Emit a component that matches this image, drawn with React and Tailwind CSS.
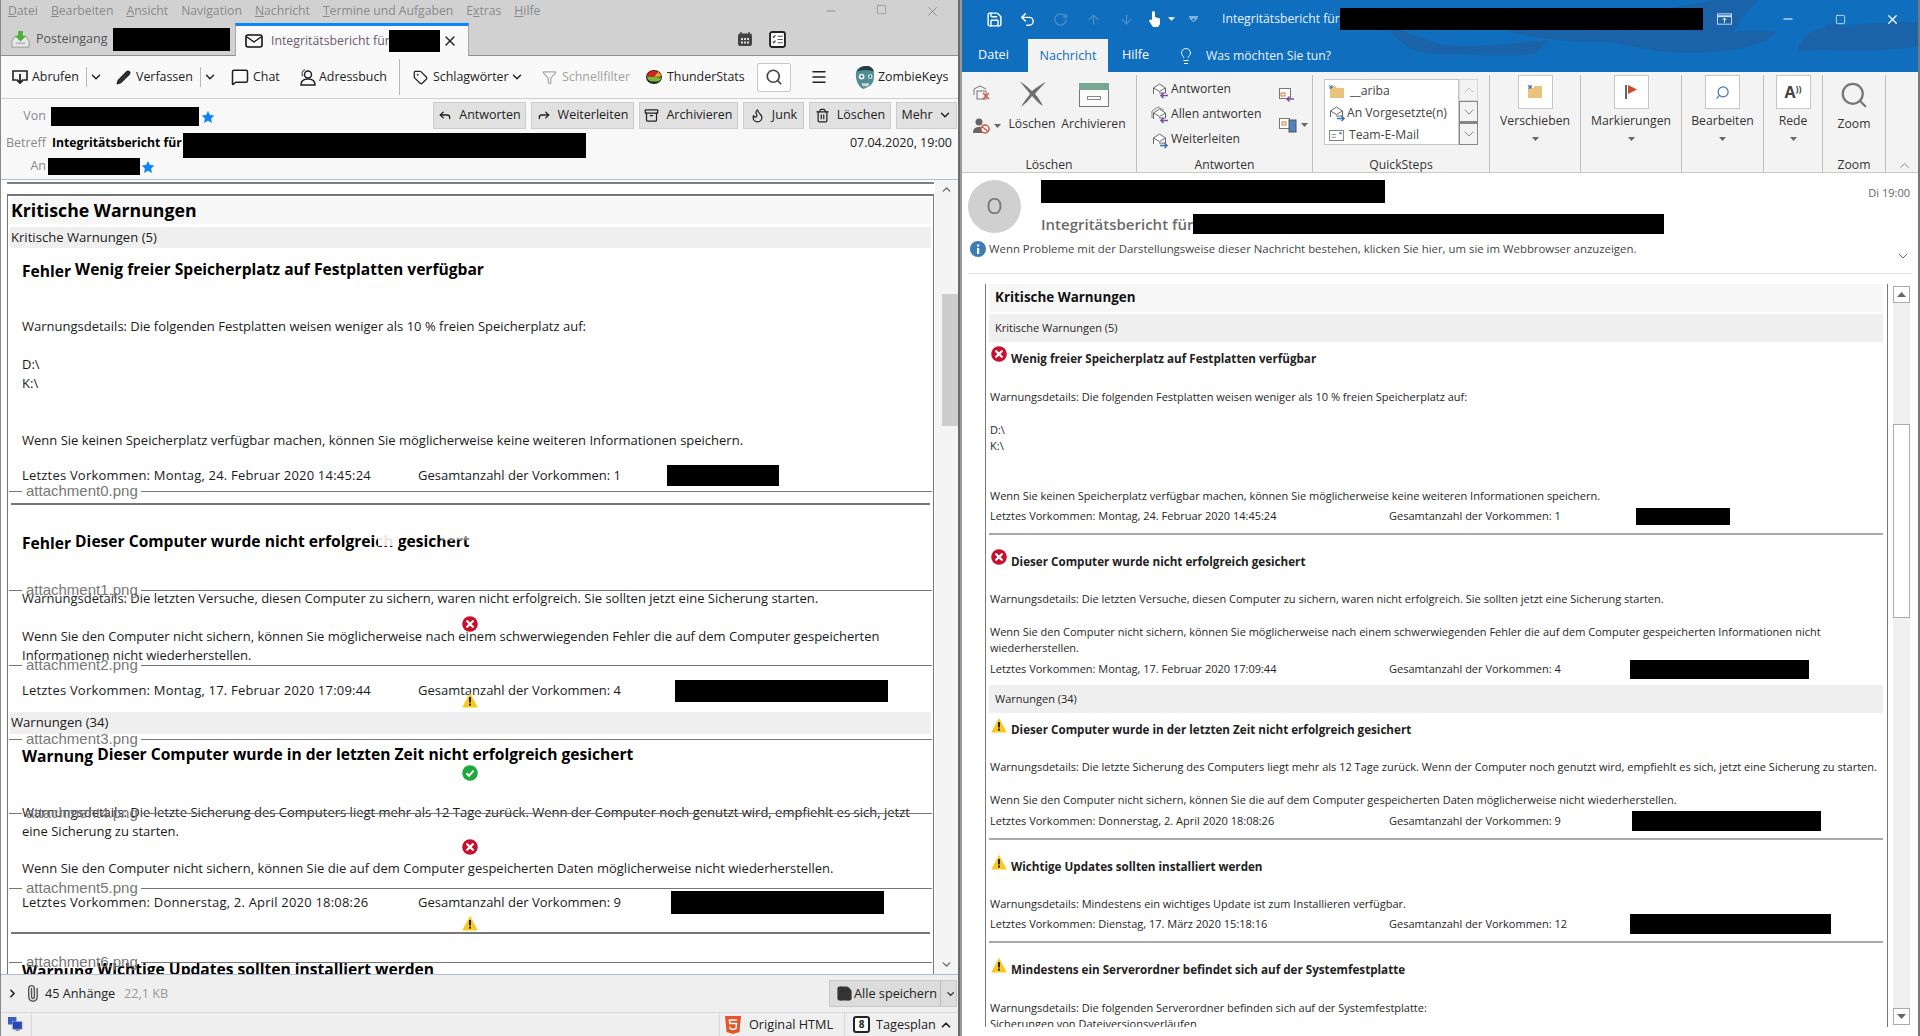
import React from 'react';
import { ChevronDown, ChevronUp, ChevronRight, X, Minus, Square, Search, Menu, Tag, Filter, MessageSquare, Trash2, Reply, Paperclip, Lightbulb, Undo2, RotateCw, ArrowUp, ArrowDown, Save, Pencil, Archive, Flame } from 'lucide-react';

const Black = ({ className }) => <div className={`bg-black shrink-0 ${className}`} />;

const Star = () => (
  <svg viewBox="0 0 16 16" className="w-[14px] h-[14px] shrink-0">
    <path d="M8 1l2.200 4.600 5 .7-3.600 3.500.9 5L8 12.400l-4.500 2.400.9-5L.8 6.300l5-.7z" fill="#0a84ff" />
  </svg>
);
const ErrIcon = () => (
  <svg viewBox="0 0 16 16" className="w-4 h-4 shrink-0">
    <circle cx="8" cy="8" r="7.800" fill="#c8102e" />
    <path d="M5.200 5.200l5.600 5.600M10.800 5.200l-5.600 5.600" stroke="#fff" strokeWidth="2.300" strokeLinecap="round" />
  </svg>
);
const WarnIcon = () => (
  <svg viewBox="0 0 16 16" className="w-4 h-4 shrink-0">
    <path d="M8 .8L15.800 15.500H.2z" fill="#fbc91e" />
    <path d="M8 5v5.500" stroke="#222" strokeWidth="2" />
    <rect x="7" y="11.600" width="2" height="2" fill="#222" />
  </svg>
);
const OkIcon = () => (
  <svg viewBox="0 0 16 16" className="w-4 h-4 shrink-0">
    <circle cx="8" cy="8" r="7.800" fill="#1fa83c" />
    <path d="M4.500 8.200l2.500 2.600 4.600-5.200" stroke="#fff" strokeWidth="2" fill="none" />
  </svg>
);

const MailArrow = ({ color, reply, stack }) => (
  <svg viewBox="0 0 18 18" className="w-[18px] h-[18px] shrink-0">
    {stack && <path d="M1 12V5l6-4 6 3" fill="none" stroke="#888" strokeWidth="1" />}
    <path d="M2.500 13V7l6-4 6 4v5H8" fill="#fff" stroke="#666" strokeWidth="1" />
    <path d="M2.500 7l6 3.500 6-3.500" fill="none" stroke="#666" strokeWidth="1" />
    {reply
      ? <path d="M17 14.500h-7m2.500-2.500L10 14.500l2.500 2.500" fill="none" stroke={color} strokeWidth="1.600" />
      : <path d="M9 14.500h7m-2.500-2.500l2.500 2.500-2.500 2.500" fill="none" stroke={color} strokeWidth="1.600" />}
  </svg>
);

// ---------- left window (Thunderbird) ----------

const MenuBar = () => (
  <div className="h-[23px] flex items-center pl-[7px] text-[12.2px] text-[#8a8a8a] shrink-0">
    <div className="flex gap-[13px]">
      <span><span className="underline">D</span>atei</span>
      <span><span className="underline">B</span>earbeiten</span>
      <span><span className="underline">A</span>nsicht</span>
      <span>Navigation</span>
      <span><span className="underline">N</span>achricht</span>
      <span><span className="underline">T</span>ermine und Aufgaben</span>
      <span>E<span className="underline">x</span>tras</span>
      <span><span className="underline">H</span>ilfe</span>
    </div>
    <div className="ml-auto flex text-[#666]">
      <div className="w-[51px] flex justify-center"><Minus size={14} strokeWidth={1} /></div>
      <div className="w-[51px] flex justify-center"><Square size={11} strokeWidth={1} /></div>
      <div className="w-[51px] flex justify-center"><X size={15} strokeWidth={1} /></div>
    </div>
  </div>
);

const TabBar = () => (
  <div className="h-[33px] flex border-b border-[#8f8f8f] relative shrink-0">
    <div className="w-[234px] flex items-center pl-[10px] text-[12.5px] text-[#555]">
      <svg viewBox="0 0 20 20" className="w-[19px] h-[19px] shrink-0">
        <path d="M1 12l3-5h12l3 5v6H1z" fill="#e8e8e8" stroke="#9a9a9a" />
        <path d="M5 13h10v2H5z" fill="#bbb" />
        <path d="M7.500 1h5v5H16l-6 6-6-6h3.500z" fill="#4caf3a" />
      </svg>
      <span className="ml-[6px] w-[77px] whitespace-nowrap">Posteingang</span>
      <Black className="w-[117px] h-[23px]" />
    </div>
    <div className="w-[234px] h-[33px] bg-[#f9f9f9] border-t-[3px] border-t-[#0a84ff] border-x border-x-[#a8a8a8] flex items-center pl-[9px] text-[12.3px] text-[#6b5a6b]">
      <svg viewBox="0 0 18 14" className="w-[18px] h-[14px] shrink-0">
        <rect x="1" y="1" width="16" height="12" rx="2" fill="none" stroke="#111" strokeWidth="1.600" />
        <path d="M2 3l7 5 7-5" fill="none" stroke="#111" strokeWidth="1.400" />
      </svg>
      <span className="ml-[8px] w-[118px] whitespace-nowrap">Integritätsbericht für</span>
      <Black className="w-[51px] h-[22px]" />
      <X size={16} className="ml-[2px] text-[#222]" />
    </div>
    <div className="ml-auto flex items-center pr-[172px] gap-[16px]">
      <svg viewBox="0 0 16 16" className="w-4 h-4">
        <rect x="1" y="2.500" width="14" height="12.500" rx="2" fill="#444" />
        <path d="M4 1v3M12 1v3" stroke="#444" strokeWidth="1.400" />
        <path d="M4 7h2v2H4zM7 7h2v2H7zM10 7h2v2h-2zM4 10.500h2v2H4zM7 10.500h2v2H7zM10 10.500h2v2h-2z" fill="#ddd" />
      </svg>
      <svg viewBox="0 0 16 16" className="w-[17px] h-[17px]">
        <rect x="1" y="1" width="14" height="14" rx="2" fill="#fff" stroke="#222" strokeWidth="1.800" />
        <path d="M3.500 5l1 1 1.600-2M3.500 10l1 1 1.600-2" fill="none" stroke="#333" />
        <path d="M8 5h5M8 8h5M8 11h5" stroke="#555" />
      </svg>
    </div>
  </div>
);

const Abrufen = () => (
  <svg viewBox="0 0 16 16" className="w-4 h-4 shrink-0">
    <path d="M4 11H1V2h14v9h-3" fill="none" stroke="#222" strokeWidth="1.600" />
    <path d="M8 5v9M4.500 10.500L8 14l3.500-3.500" fill="none" stroke="#222" strokeWidth="1.800" />
  </svg>
);
const People = () => (
  <svg viewBox="0 0 18 18" className="w-[18px] h-[18px] shrink-0">
    <circle cx="10" cy="6.500" r="3.500" fill="none" stroke="#222" strokeWidth="1.500" />
    <path d="M3 17c0-4 3-6 7-6s7 2 7 6z" fill="none" stroke="#222" strokeWidth="1.500" />
    <path d="M5 8c-2-2-1-5 2-6.500" fill="none" stroke="#555" strokeWidth="1.200" />
  </svg>
);
const Pie = () => (
  <svg viewBox="0 0 16 14" className="w-4 h-[14px] shrink-0">
    <ellipse cx="8" cy="7" rx="8" ry="7" fill="#222" />
    <path d="M1 6.500C1 3 4 1 8 1c1.500 0 3 .3 4 1L8 7z" fill="#d8201c" />
    <path d="M12 2c2 1 3 2.500 3 4.500L8 7z" fill="#f2a51c" />
    <path d="M1 6.500L8 7l7 .5c0 2-1 3-3 4H5C3 11 1 9 1 6.500z" fill="#79b93a" />
  </svg>
);
const Zombie = () => (
  <svg viewBox="0 0 24 26" className="w-[23px] h-[25px] shrink-0">
    <path d="M3 10C3 4 7 1 13 1s9 4 9 10-2 9-5 11l-6 3c-5-2-8-8-8-15z" fill="#4b8f99" />
    <path d="M4 7c2-4 6-6 10-6 4 0 7 2 8 6-5-2-13-2-18 0z" fill="#2d3a42" />
    <circle cx="9" cy="12" r="3" fill="#e9eee6" /><circle cx="18" cy="12" r="2.400" fill="#e9eee6" />
    <circle cx="9" cy="12" r="1" fill="#222" /><circle cx="18" cy="12" r="1" fill="#222" />
    <path d="M9 19h8l-1 3h-6z" fill="#d9d6c6" />
  </svg>
);
const Sep = ({ className }) => <div className={`w-px bg-[#b8b8b8] shrink-0 ${className}`} />;

const Toolbar = () => (
  <div className="h-[43px] bg-[#f9f9f9] border-b border-[#cfcfcf] flex items-center text-[12.4px] text-[#222] whitespace-nowrap shrink-0">
    <div className="ml-[11px]"><Abrufen /></div>
    <span className="ml-[4px] w-[46px]">Abrufen</span>
    <Sep className="ml-[8px] h-[20px]" />
    <ChevronDown size={14} strokeWidth={2.500} className="ml-[2px]" />
    <Pencil size={15} fill="#333" className="ml-[13px] shrink-0" />
    <span className="ml-[5px] w-[56px]">Verfassen</span>
    <Sep className="ml-[8px] h-[20px]" />
    <ChevronDown size={14} strokeWidth={2.500} className="ml-[2px]" />
    <MessageSquare size={18} strokeWidth={2} className="ml-[14px] shrink-0" />
    <span className="ml-[4px] w-[26px]">Chat</span>
    <div className="ml-[19px]"><People /></div>
    <span className="ml-[3px] w-[68px]">Adressbuch</span>
    <Sep className="ml-[12px] h-[36px]" />
    <Tag size={15} className="ml-[13px] shrink-0" />
    <span className="ml-[5px] w-[76px]">Schlagwörter</span>
    <ChevronDown size={14} strokeWidth={2.500} className="ml-[1px]" />
    <Filter size={15} className="ml-[18px] text-[#a8a8a8] shrink-0" />
    <span className="ml-[5px] w-[66px] text-[#a0a0a0]">Schnellfilter</span>
    <div className="ml-[18px]"><Pie /></div>
    <span className="ml-[5px] w-[76px]">ThunderStats</span>
    <div className="ml-[14px] w-[34px] h-[29px] bg-white border border-[#c8c8c8] rounded-[2px] flex items-center justify-center shrink-0">
      <Search size={18} strokeWidth={2.200} className="text-[#444]" />
    </div>
    <Menu size={18} strokeWidth={2} className="ml-[19px] shrink-0" />
    <div className="ml-[25px]"><Zombie /></div>
    <span className="ml-[2px]">ZombieKeys</span>
  </div>
);

const HeadBtn = ({ icon, label, className }) => (
  <div className={`h-[27px] bg-[#e1e1e1] border border-[#cdcdcd] flex items-center justify-center gap-[7px] text-[12.5px] text-[#222] whitespace-nowrap shrink-0 ${className}`}>
    {icon}{label}
  </div>
);

const MsgHeader = () => (
  <div className="h-[81px] bg-[#f8f8f8] border-b border-[#b0bdd0] text-[12.5px] shrink-0">
    <div className="h-[30px] flex items-center pr-[1px] pt-[2px]">
      <span className="w-[45px] text-right text-[#8a8a8a] mt-[3px]">Von</span>
      <Black className="ml-[5px] w-[148px] h-[19px] mt-[3px]" />
      <div className="ml-[2px] mt-[3px]"><Star /></div>
      <div className="ml-auto flex gap-[5px]">
        <HeadBtn className="w-[93px]" icon={<Reply size={14} strokeWidth={2.200} />} label="Antworten" />
        <HeadBtn className="w-[103px]" icon={<Reply size={14} strokeWidth={2.200} className="-scale-x-100" />} label="Weiterleiten" />
        <HeadBtn className="w-[99px]" icon={<Archive size={15} />} label="Archivieren" />
        <HeadBtn className="w-[61px]" icon={<Flame size={15} />} label="Junk" />
        <HeadBtn className="w-[82px]" icon={<Trash2 size={15} />} label="Löschen" />
        <HeadBtn className="w-[61px]" label={<span className="flex items-center gap-[5px]">Mehr <ChevronDown size={14} strokeWidth={2.500} /></span>} />
      </div>
    </div>
    <div className="mt-[4px] h-[25px] flex items-center pr-[6px]">
      <span className="w-[45px] text-right text-[#8a8a8a] mb-[5px]">Betreff</span>
      <span className="ml-[6px] w-[131px] font-bold text-black whitespace-nowrap text-[12.2px] mb-[5px]">Integritätsbericht für</span>
      <Black className="w-[403px] h-[25px]" />
      <span className="ml-auto text-[#222] mb-[5px]">07.04.2020, 19:00</span>
    </div>
    <div className="h-[17px] flex items-center">
      <span className="w-[45px] text-right text-[#8a8a8a]">An</span>
      <Black className="ml-[2px] w-[92px] h-[17px]" />
      <div className="ml-[1px]"><Star /></div>
    </div>
  </div>
);

const Row = ({ children, className = '' }) => (
  <div className={`pl-[12px] h-[19px] leading-[19px] whitespace-nowrap ${className}`}>{children}</div>
);

const Para = ({ children, className = '' }) => (
  <div className={`pl-[12px] leading-[19px] whitespace-nowrap ${className}`}>{children}</div>
);

const LeftHeading = ({ kind, title, className = '' }) => (
  <div className={`h-[24px] flex items-center pl-[12px] font-bold text-black whitespace-nowrap text-[15.6px] ${className}`}>
    <span className="mt-[4px]">{kind}</span>
    <span className="ml-[4px]">{title}</span>
  </div>
);

const LeftStats = ({ date, count, countW, rectW, rectH, className = '' }) => (
  <div className={`pl-[12px] h-[19px] flex items-center whitespace-nowrap ${className}`}>
    <span className="w-[396px] tracking-[0.2px]">Letztes Vorkommen: {date}</span>
    <span className={countW}>Gesamtanzahl der Vorkommen: {count}</span>
    <Black className={`${rectW} ${rectH}`} />
  </div>
);

const Attach = ({ name, className }) => (
  <div className={`absolute left-[8px] w-[923px] h-[18px] flex items-center ${className}`}>
    <div className="w-[13px] h-px bg-[#777]" />
    <span className="ml-[4px] font-['Liberation_Sans',sans-serif] text-[15px] text-[#777] leading-[18px]">{name}</span>
    <div className="ml-[3px] flex-1 h-px bg-[#777]" />
  </div>
);

const LeftBody = () => (
  <div className="flex-1 min-h-0 flex relative overflow-hidden bg-white text-[13px] text-[#1a1a1a]">
    <div className="w-[934px] shrink-0">
      <div className="mt-[2px] ml-[6px] w-[927px] h-[2px] bg-[#808080]" />
      <div className="mt-[10px] ml-[6px] w-[927px] h-[800px] border-t-2 border-x border-[#777] px-[2px]">
        <div className="mt-[1px] h-[27px] bg-[#f7f7f7] flex items-center pl-[1px] font-bold text-[17.700px] text-black">Kritische Warnungen</div>
        <div className="mt-[3px] h-[21px] bg-[#efefef] flex items-center pl-[1px] text-[13.1px]">Kritische Warnungen (5)</div>
        <LeftHeading className="mt-[10px]" kind="Fehler" title="Wenig freier Speicherplatz auf Festplatten verfügbar" />
        <Row className="mt-[35px]">Warnungsdetails: Die folgenden Festplatten weisen weniger als 10 % freien Speicherplatz auf:</Row>
        <Row className="mt-[19px]">D:\</Row>
        <Row>K:\</Row>
        <Row className="mt-[38px]">Wenn Sie keinen Speicherplatz verfügbar machen, können Sie möglicherweise keine weiteren Informationen speichern.</Row>
        <LeftStats className="mt-[16px]" date="Montag, 24. Februar 2020 14:45:24" count="1" countW="w-[249px]" rectW="w-[112px]" rectH="h-[21px]" />
        <div className="mt-[18px] mx-px h-[2px] bg-[#777]" />
        <LeftHeading className="mt-[25px]" kind="Fehler" title="Dieser Computer wurde nicht erfolgreich gesichert" />
        <Row className="mt-[35px]">Warnungsdetails: Die letzten Versuche, diesen Computer zu sichern, waren nicht erfolgreich. Sie sollten jetzt eine Sicherung starten.</Row>
        <Para className="mt-[19px]">Wenn Sie den Computer nicht sichern, können Sie möglicherweise nach einem schwerwiegenden Fehler die auf dem Computer gespeicherten<br />Informationen nicht wiederherstellen.</Para>
        <LeftStats className="mt-[16px]" date="Montag, 17. Februar 2020 17:09:44" count="4" countW="w-[257px]" rectW="w-[213px]" rectH="h-[22px]" />
        <div className="mt-[12px] h-[22px] bg-[#efefef] flex items-center pl-px text-[13.1px]">Warnungen (34)</div>
        <LeftHeading className="mt-[9px]" kind="Warnung" title="Dieser Computer wurde in der letzten Zeit nicht erfolgreich gesichert" />
        <Para className="mt-[36px]">Warnungsdetails: Die letzte Sicherung des Computers liegt mehr als 12 Tage zurück. Wenn der Computer noch genutzt wird, empfiehlt es sich, jetzt<br />eine Sicherung zu starten.</Para>
        <Row className="mt-[18px]">Wenn Sie den Computer nicht sichern, können Sie die auf dem Computer gespeicherten Daten möglicherweise nicht wiederherstellen.</Row>
        <LeftStats className="mt-[15px]" date="Donnerstag, 2. April 2020 18:08:26" count="9" countW="w-[253px]" rectW="w-[213px]" rectH="h-[23px]" />
        <div className="mt-[20px] mx-px h-[2px] bg-[#777]" />
        <LeftHeading className="mt-[24px]" kind="Warnung" title="Wichtige Updates sollten installiert werden" />
      </div>
    </div>
    {/* the attachments and their icons are drawn over the message text */}
    <Attach name="attachment0.png" className="top-[302px]" />
    <Attach name="attachment1.png" className="top-[401px]" />
    <Attach name="attachment2.png" className="top-[476px]" />
    <Attach name="attachment3.png" className="top-[550px]" />
    <Attach name="attachment4.png" className="top-[624px]" />
    <Attach name="attachment5.png" className="top-[699px]" />
    <Attach name="attachment6.png" className="top-[773px]" />
    <div className="absolute left-[461px] top-[436px]"><ErrIcon /></div>
    <div className="absolute left-[461px] top-[512px]"><WarnIcon /></div>
    <div className="absolute left-[461px] top-[585px]"><OkIcon /></div>
    <div className="absolute left-[461px] top-[659px]"><ErrIcon /></div>
    <div className="absolute left-[461px] top-[735px]"><WarnIcon /></div>
    <div className="absolute left-[377px] top-[353px] w-[21px] h-[13px] bg-white/90" />
    <div className="absolute left-[440px] top-[354px] w-[28px] h-[6px] bg-white/50" />
    <div className="w-[23px] bg-[#f4f4f4] relative flex flex-col items-center">
      <ChevronUp size={13} strokeWidth={2.500} className="mt-[3px] text-[#666]" />
      <div className="mt-[98px] ml-[7px] w-[16px] h-[132px] bg-[#cdcdcd]" />
      <ChevronDown size={13} strokeWidth={2.500} className="mt-auto mb-[3px] text-[#666]" />
    </div>
  </div>
);

const AttachBar = () => (
  <div className="h-[38px] bg-[#efefef] border-t border-[#b0bdd0] flex items-center text-[12.7px] text-[#222] pl-[5px] whitespace-nowrap shrink-0">
    <ChevronRight size={13} strokeWidth={3} className="shrink-0" />
    <Paperclip size={17} className="ml-[5px] text-[#555] shrink-0 -rotate-45" />
    <span className="ml-[4px] w-[68px]">45 Anhänge</span>
    <span className="ml-[11px] text-[#999]">22,1 KB</span>
    <div className="ml-auto mr-[1px] w-[128px] h-[27px] bg-[#dcdcdc] border border-[#c8c8c8] flex items-center">
      <Save size={17} fill="#333" color="#333" className="ml-[6px] shrink-0" />
      <span className="ml-[1px] w-[84px]">Alle speichern</span>
      <div className="w-px h-full bg-[#bbb] ml-[3px]" />
      <ChevronDown size={14} strokeWidth={2.500} className="ml-[4px]" />
    </div>
  </div>
);

const StatusBar = () => (
  <div className="h-[24px] shrink-0 bg-[#efefef] border-t border-[#d8d8d8] flex items-center text-[12.7px] text-[#222] whitespace-nowrap">
    <div className="w-[31px] h-full border-r border-[#d8d8d8] flex items-center pl-[7px]">
      <svg viewBox="0 0 16 16" className="w-[15px] h-[15px]">
        <rect x="0" y="0" width="9" height="8" fill="#3b5cc4" />
        <rect x="5" y="5" width="10" height="8" fill="#2747b8" stroke="#9ab" strokeWidth=".6" />
        <path d="M8 13h4v2H8z" fill="#888" />
      </svg>
    </div>
    <div className="ml-auto w-[125px] h-full border-l border-[#d8d8d8] flex items-center pl-[5px]">
      <svg viewBox="0 0 16 18" className="w-[16px] h-[18px] shrink-0">
        <path d="M0 0h16l-1.500 16L8 18l-6.500-2z" fill="#e5532d" />
        <path d="M12 4H4.500l.3 3.500H11.500L11 12.500 8 13.500 5 12.500 4.800 10.500" fill="none" stroke="#fff" strokeWidth="1.500" />
      </svg>
      <span className="ml-[8px]">Original HTML</span>
    </div>
    <div className="w-[114px] h-full border-l border-[#d8d8d8] flex items-center pl-[8px]">
      <div className="w-[17px] h-[17px] border-2 border-[#222] rounded-[3px] bg-white text-[10px] font-bold flex items-center justify-center shrink-0">8</div>
      <span className="ml-[6px]">Tagesplan</span>
      <ChevronUp size={14} strokeWidth={3} className="ml-[3px]" />
    </div>
  </div>
);

const LeftWindow = () => (
  <div className="w-[960px] h-full flex flex-col border-l border-r-2 border-l-[#8a8a8a] border-r-[#6b6b6b] bg-[#d1d1d1] font-['Open_Sans','Noto_Sans',sans-serif]">
    <MenuBar />
    <TabBar />
    <Toolbar />
    <MsgHeader />
    <LeftBody />
    <AttachBar />
    <StatusBar />
  </div>
);

// ---------- right window (Outlook) ----------

const Dolphins = () => (
  <svg viewBox="0 0 560 72" className="absolute right-0 top-0 w-[560px] h-[72px]">
    <path d="M30 28c15 2 30 8 50 16 20 4 50 2 110-4-6 8-10 10-14 14-30 2-60 0-90 0-20 2-40-4-56-26z" fill="#1a63a8" />
    <path d="M130 22c40 8 90 8 130-2 30-8 60-14 100-20h40c-10 10-20 24-24 32 14-2 28-2 42 0-6 8-20 14-45 18-30 4-60 4-90-2-20-4-40-8-60-6-30-2-70-6-93-20z" fill="#1a63a8" />
    <path d="M440 52c0-10 10-22 26-24 4-6 10-6 18-2 20-2 40-4 76-4v24c-20 4-60 6-90 4-12 0-22 0-30 2z" fill="#1a63a8" />
  </svg>
);

const TitleRow = () => (
  <div className="h-[38px] relative flex items-center text-white">
    <Save size={17} className="ml-[24px] shrink-0" />
    <Undo2 size={17} className="ml-[16px] shrink-0" />
    <RotateCw size={15} className="ml-[17px] text-[#4d8fcb] shrink-0" />
    <ArrowUp size={15} className="ml-[18px] text-[#4d8fcb] shrink-0" />
    <ArrowDown size={15} className="ml-[18px] text-[#4d8fcb] shrink-0" />
    <svg viewBox="0 0 14 18" className="ml-[14px] w-[14px] h-[18px] shrink-0">
      <path d="M4 9V2.500a1.500 1.500 0 013 0V7l5 1.500V14l-2 3H5L1 11c0-1.500 2-2 3-1z" fill="#fff" />
    </svg>
    <svg viewBox="0 0 8 4" className="ml-[6px] w-[7px] h-[4px] shrink-0"><path d="M0 0h8L4 4z" fill="#fff" /></svg>
    <svg viewBox="0 0 10 7" className="ml-[14px] w-[9px] h-[7px] shrink-0"><path d="M0 .5h10M1 2l4 4 4-4z" fill="none" stroke="#cfe2f3" /></svg>
    <span className="ml-[24px] w-[118px] text-[12.2px] text-[#e8f1fa] whitespace-nowrap">Integritätsbericht für</span>
    <Black className="w-[363px] h-[22px] z-10" />
    <div className="ml-auto flex items-center z-10">
      <svg viewBox="0 0 16 12" className="w-[15px] h-[12px] mr-[30px]">
        <rect x=".5" y=".5" width="15" height="11" fill="none" stroke="#cfe2f3" />
        <path d="M.5 3h15" stroke="#cfe2f3" strokeWidth="2" />
        <path d="M8 10V5M6 7l2-2 2 2" fill="none" stroke="#fff" />
      </svg>
      <div className="w-[52px] flex justify-center"><Minus size={14} /></div>
      <div className="w-[52px] flex justify-center"><Square size={11} strokeWidth={1.500} /></div>
      <div className="w-[52px] flex justify-center"><X size={15} /></div>
    </div>
  </div>
);

const TabRow = () => (
  <div className="h-[34px] relative flex items-end text-[12.6px] text-white">
    <span className="ml-[16px] mb-[7px] w-[50px]">Datei</span>
    <div className="w-[80px] h-[33px] pt-[2px] bg-[#f3f3f3] text-[#106ebe] flex items-center justify-center">Nachricht</div>
    <span className="ml-[14px] mb-[7px] w-[38px]">Hilfe</span>
    <Lightbulb size={18} strokeWidth={1.300} className="ml-[17px] mb-[7px] shrink-0" />
    <span className="ml-[11px] mb-[7px] text-[#e8f1fa] text-[12.2px]">Was möchten Sie tun?</span>
  </div>
);

const Group = ({ className, label, children }) => (
  <div className={`h-[97px] border-r border-[#c0c0c0] flex flex-col shrink-0 ${className}`}>
    <div className="flex-1 min-h-0 flex">{children}</div>
    <div className="h-[17px] leading-[19px] text-center text-[12.2px] text-[#333]">{label}</div>
  </div>
);

const Caret = ({ className = '' }) => (
  <svg viewBox="0 0 7 4" className={`w-[7px] h-[4px] shrink-0 ${className}`}><path d="M0 0h7L3.500 4z" fill="#666" /></svg>
);

const BigBtn = ({ icon, label, w }) => (
  <div className={`flex flex-col items-center ${w}`}>
    <div className="w-[35px] h-[34px] bg-white border border-[#c6c6c6] flex items-center justify-center">{icon}</div>
    <span className="mt-[3px] text-[12.2px] text-[#333] whitespace-nowrap">{label}</span>
    <Caret className="mt-[7px]" />
  </div>
);

const ReplyRow = ({ label, ...props }) => (
  <div className="h-[25px] flex items-center text-[12.2px] text-[#333] whitespace-nowrap">
    <MailArrow {...props} />
    <span className="ml-[2px]">{label}</span>
  </div>
);

const Ribbon = () => (
  <div className="h-[101px] bg-[#f3f3f3] border-b border-[#c9c9c9] flex pt-[3px] shrink-0">
    <Group className="w-[175px]" label="Löschen">
      <div className="ml-[11px] w-[37px] flex flex-col gap-[17px] pt-[10px]">
        <svg viewBox="0 0 18 16" className="w-[18px] h-[16px]">
          <path d="M1 10V4l6-3 6 3" fill="none" stroke="#777" /><rect x="4" y="6" width="9" height="8" fill="none" stroke="#777" />
          <path d="M10 8l6 6m0-6l-6 6" stroke="#d25340" strokeWidth="1.500" />
        </svg>
        <div className="flex items-center gap-[4px]">
          <svg viewBox="0 0 17 16" className="w-[17px] h-[16px] shrink-0">
            <circle cx="6" cy="4" r="3.500" fill="#666" /><path d="M0 15c0-4 2-6 6-6s5 2 5 6z" fill="#666" />
            <circle cx="12" cy="11" r="4" fill="#fff" stroke="#d25340" strokeWidth="1.500" /><path d="M9 8.500l6 5" stroke="#d25340" strokeWidth="1.500" />
          </svg>
          <Caret />
        </div>
      </div>
      <div className="w-[44px] flex flex-col items-center pt-[5px]">
        <svg viewBox="0 0 30 28" className="w-[30px] h-[28px] shrink-0">
          <path d="M3 2c4 1 8 6 12 9 4-3 9-7 14-9-4 4-9 9-11 12 3 3 6 8 8 12-4-2-8-7-11-10-3 4-7 8-11 11 2-4 6-9 9-13-3-4-7-9-10-12z" fill="#6e6e6e" />
        </svg>
        <span className="mt-[7px] text-[12.2px] text-[#333]">Löschen</span>
      </div>
      <div className="ml-[7px] flex flex-col items-center w-[65px] pt-[8px]">
        <div className="w-[30px] h-[24px] border border-[#777] border-t-0 bg-[#fafafa] relative flex items-center justify-center">
          <div className="absolute -left-px -right-px top-0 h-[7px] bg-[#7aa695]" />
          <div className="w-[14px] h-[4px] border border-[#888] mt-[6px]" />
        </div>
        <span className="mt-[8px] text-[12.2px] text-[#333]">Archivieren</span>
      </div>
    </Group>
    <Group className="w-[176px]" label="Antworten">
      <div className="ml-[14px] w-[128px] pt-[2px]">
        <ReplyRow label="Antworten" color="#7d4fa8" reply />
        <ReplyRow label="Allen antworten" color="#7d4fa8" reply stack />
        <ReplyRow label="Weiterleiten" color="#3a73b5" />
      </div>
      <div className="flex flex-col gap-[15px] pt-[13px]">
        <svg viewBox="0 0 16 14" className="w-4 h-[14px]">
          <rect x=".5" y=".5" width="11" height="10" fill="#fff" stroke="#777" /><rect x="2" y="5" width="4" height="3" fill="none" stroke="#d9772a" />
          <path d="M15 11H8m2.500-2.500L8 11l2.500 2.500" fill="none" stroke="#7d4fa8" strokeWidth="1.500" />
        </svg>
        <div className="flex items-center gap-[4px]">
          <svg viewBox="0 0 18 16" className="w-[18px] h-4">
            <rect x=".5" y="1.500" width="10" height="10" fill="#fff" stroke="#777" /><rect x="3" y="5" width="4" height="3" fill="none" stroke="#d9772a" />
            <rect x="10" y="3" width="7" height="12" fill="#4c83c3" stroke="#555" />
          </svg>
          <Caret />
        </div>
      </div>
    </Group>
    <Group className="w-[177px]" label="QuickSteps">
      <div className="ml-[11px] mt-[4px] w-[155px] h-[66px] flex shrink-0">
        <div className="w-[135px] h-full bg-white border border-[#c6c6c6] text-[12.2px] text-[#444] whitespace-nowrap">
          <div className="h-[22px] flex items-center pl-[4px]">
            <svg viewBox="0 0 16 13" className="w-[16px] h-[13px] shrink-0">
              <path d="M1 3V1h5l2 2h7v10H1z" fill="#eac27c" />
              <path d="M0 0l3 3m0-3v3H0" fill="none" stroke="#3a73b5" />
            </svg>
            <span className="ml-[5px]">__ariba</span>
          </div>
          <div className="h-[22px] flex items-center pl-[3px]">
            <MailArrow color="#3a73b5" /><span className="ml-[1px]">An Vorgesetzte(n)</span>
          </div>
          <div className="h-[22px] flex items-center pl-[4px]">
            <svg viewBox="0 0 16 12" className="w-[15px] h-[11px] shrink-0">
              <rect x=".5" y=".5" width="15" height="11" fill="#fff" stroke="#777" />
              <path d="M2.500 5h5M2.500 8h5" stroke="#888" /><rect x="11" y="2.500" width="2.500" height="2" fill="#3a73b5" />
            </svg>
            <span className="ml-[5px]">Team-E-Mail</span>
          </div>
        </div>
        <div className="w-[19px] flex flex-col text-[#555]">
          <div className="h-[22px] border border-[#d6d6d6] flex items-center justify-center"><ChevronUp size={16} strokeWidth={1} className="text-[#aaa]" /></div>
          <div className="h-[21px] border border-[#888] flex items-center justify-center"><ChevronDown size={16} strokeWidth={1} /></div>
          <div className="h-[23px] border border-[#888] border-t-2 flex items-center justify-center"><ChevronDown size={16} strokeWidth={1} /></div>
        </div>
      </div>
    </Group>
    <Group className="w-[91px]" label="">
      <BigBtn w="w-[90px]" label="Verschieben" icon={
        <svg viewBox="0 0 16 14" className="w-4 h-[14px]">
          <path d="M1 4V3h5l2-2h7v12H1z" fill="#eac27c" />
          <path d="M1 0l3 3m0-3v3H1" fill="none" stroke="#3a73b5" strokeWidth="1.200" />
        </svg>
      } />
    </Group>
    <Group className="w-[101px]" label="">
      <BigBtn w="w-[100px]" label="Markierungen" icon={
        <svg viewBox="0 0 14 16" className="w-[14px] h-4"><rect x="1" y="1" width="2" height="14" fill="#666" /><path d="M4 1l9 4.500L4 10z" fill="#d2482d" /></svg>
      } />
    </Group>
    <Group className="w-[82px]" label="">
      <BigBtn w="w-[81px]" label="Bearbeiten" icon={<Search size={15} strokeWidth={2} className="text-[#3f78b8] -scale-x-100" />} />
    </Group>
    <Group className="w-[59px]" label="">
      <BigBtn w="w-[58px]" label="Rede" icon={<span className="font-bold text-[16px] text-[#444] leading-none">A<span className="text-[9px] align-top">))</span></span>} />
    </Group>
    <Group className="w-[63px]" label="Zoom">
      <div className="w-[62px] flex flex-col items-center pt-[5px]">
        <Search size={30} strokeWidth={1.800} className="text-[#777]" />
        <span className="mt-[5px] text-[12.2px] text-[#333]">Zoom</span>
      </div>
    </Group>
    <ChevronUp size={15} strokeWidth={1} className="ml-[11px] mt-[83px] text-[#444]" />
  </div>
);

const RRow = ({ children, className = '' }) => (
  <div className={`pl-px h-[16px] leading-[16px] whitespace-nowrap ${className}`}>{children}</div>
);

const RHeading = ({ icon, title, className = '' }) => (
  <div className={`h-[24px] flex pl-[2px] font-bold text-[11.65px] text-[#222] whitespace-nowrap ${className}`}>
    {icon}
    <span className="ml-[4px] mt-[2px] self-center">{title}</span>
  </div>
);

const RStats = ({ date, count, countW, rectW, rectH, className = '' }) => (
  <div className={`pl-px h-[16px] flex items-center whitespace-nowrap ${className}`}>
    <span className="w-[399px]">Letztes Vorkommen: {date}</span>
    <span className={countW}>Gesamtanzahl der Vorkommen: {count}</span>
    <Black className={`${rectW} ${rectH}`} />
  </div>
);

const RightBody = () => (
  <div className="flex-1 min-h-0 flex bg-white">
    <div className="ml-[23px] mt-[10px] mb-[9px] w-[903px] border-x border-[#777] pl-[3px] pr-[4px] overflow-hidden text-[11px] text-[#262626] shrink-0">
      <div className="h-[28px] pb-[2px] bg-[#f7f7f7] flex items-center pl-[6px] font-bold text-[13.4px] text-[#111]">Kritische Warnungen</div>
      <div className="mt-[2px] h-[28px] bg-[#efefef] flex items-center pl-[6px]">Kritische Warnungen (5)</div>
      <RHeading className="mt-[4px]" icon={<ErrIcon />} title="Wenig freier Speicherplatz auf Festplatten verfügbar" />
      <RRow className="mt-[19px]">Warnungsdetails: Die folgenden Festplatten weisen weniger als 10 % freien Speicherplatz auf:</RRow>
      <RRow className="mt-[17px]">D:\</RRow>
      <RRow>K:\</RRow>
      <RRow className="mt-[34px]">Wenn Sie keinen Speicherplatz verfügbar machen, können Sie möglicherweise keine weiteren Informationen speichern.</RRow>
      <RStats className="mt-[4px]" date="Montag, 24. Februar 2020 14:45:24" count="1" countW="w-[247px]" rectW="w-[94px]" rectH="h-[17px]" />
      <div className="mt-[9px] h-[2px] bg-[#aaa]" />
      <RHeading className="mt-[14px]" icon={<ErrIcon />} title="Dieser Computer wurde nicht erfolgreich gesichert" />
      <RRow className="mt-[18px]">Warnungsdetails: Die letzten Versuche, diesen Computer zu sichern, waren nicht erfolgreich. Sie sollten jetzt eine Sicherung starten.</RRow>
      <div className="mt-[17px] pl-px leading-[16px] whitespace-nowrap">Wenn Sie den Computer nicht sichern, können Sie möglicherweise nach einem schwerwiegenden Fehler die auf dem Computer gespeicherten Informationen nicht<br />wiederherstellen.</div>
      <RStats className="mt-[5px]" date="Montag, 17. Februar 2020 17:09:44" count="4" countW="w-[241px]" rectW="w-[179px]" rectH="h-[19px]" />
      <div className="mt-[8px] h-[28px] bg-[#efefef] flex items-center pl-[6px]">Warnungen (34)</div>
      <RHeading className="mt-[4px]" icon={<WarnIcon />} title="Dieser Computer wurde in der letzten Zeit nicht erfolgreich gesichert" />
      <RRow className="mt-[18px]">Warnungsdetails: Die letzte Sicherung des Computers liegt mehr als 12 Tage zurück. Wenn der Computer noch genutzt wird, empfiehlt es sich, jetzt eine Sicherung zu starten.</RRow>
      <RRow className="mt-[17px]">Wenn Sie den Computer nicht sichern, können Sie die auf dem Computer gespeicherten Daten möglicherweise nicht wiederherstellen.</RRow>
      <RStats className="mt-[5px]" date="Donnerstag, 2. April 2020 18:08:26" count="9" countW="w-[243px]" rectW="w-[189px]" rectH="h-[20px]" />
      <div className="mt-[9px] h-[2px] bg-[#aaa]" />
      <RHeading className="mt-[14px]" icon={<WarnIcon />} title="Wichtige Updates sollten installiert werden" />
      <RRow className="mt-[18px]">Warnungsdetails: Mindestens ein wichtiges Update ist zum Installieren verfügbar.</RRow>
      <RStats className="mt-[4px]" date="Dienstag, 17. März 2020 15:18:16" count="12" countW="w-[241px]" rectW="w-[201px]" rectH="h-[20px]" />
      <div className="mt-[9px] h-[2px] bg-[#aaa]" />
      <RHeading className="mt-[14px]" icon={<WarnIcon />} title="Mindestens ein Serverordner befindet sich auf der Systemfestplatte" />
      <RRow className="mt-[19px]">Warnungsdetails: Die folgenden Serverordner befinden sich auf der Systemfestplatte:</RRow>
      <RRow>Sicherungen von Dateiversionsverläufen</RRow>
    </div>
    <div className="ml-[5px] mt-[12px] mb-[11px] w-[17px] bg-[#f0f0f0] flex flex-col">
      <div className="h-[17px] bg-white border border-[#ababab] flex items-center justify-center">
        <svg viewBox="0 0 9 5" className="w-[9px] h-[5px]"><path d="M0 5h9L4.500 0z" fill="#666" /></svg>
      </div>
      <div className="mt-[121px] h-[194px] bg-white border border-[#ababab]" />
      <div className="mt-auto h-[17px] bg-white border border-[#ababab] flex items-center justify-center">
        <svg viewBox="0 0 9 5" className="w-[9px] h-[5px]"><path d="M0 0h9L4.500 5z" fill="#666" /></svg>
      </div>
    </div>
  </div>
);

const RightHeader = () => (
  <div className="h-[101px] bg-white shrink-0">
    <div className="h-[67px] flex">
      <div className="ml-[6px] mt-[7px] w-[53px] h-[53px] rounded-full bg-[#d0d0d0] flex items-center justify-center text-[21px] text-[#777] shrink-0">O</div>
      <div className="ml-[20px] flex-1 flex flex-col">
        <div className="mt-[7px] flex">
          <Black className="w-[344px] h-[23px]" />
          <span className="ml-auto mr-[8px] mt-[5px] text-[11px] text-[#666]">Di 19:00</span>
        </div>
        <div className="mt-[10px] flex items-center">
          <span className="w-[152px] text-[15px] font-semibold text-[#6b6b6b] whitespace-nowrap">Integritätsbericht für</span>
          <Black className="w-[471px] h-[20px]" />
        </div>
      </div>
    </div>
    <div className="h-[34px] ml-[6px] mr-[6px] border-b border-[#e0e0e0] flex items-start">
      <svg viewBox="0 0 16 16" className="ml-[2px] mt-px w-4 h-4 shrink-0">
        <circle cx="8" cy="8" r="8" fill="#3e7cb8" /><rect x="7" y="7" width="2.200" height="6" fill="#fff" /><rect x="7" y="3.500" width="2.200" height="2" fill="#fff" />
      </svg>
      <span className="ml-[3px] text-[11.4px] text-[#444] whitespace-nowrap">Wenn Probleme mit der Darstellungsweise dieser Nachricht bestehen, klicken Sie hier, um sie im Webbrowser anzuzeigen.</span>
      <ChevronDown size={16} strokeWidth={1.500} className="ml-auto mr-[1px] mt-[8px] text-[#666]" />
    </div>
  </div>
);

const RightWindow = () => (
  <div className="w-[960px] h-full flex flex-col border-l-2 border-r-2 border-l-[#9a9a9a] border-r-[#777] font-['Open_Sans','Noto_Sans',sans-serif] bg-white">
    <div className="h-[72px] bg-[#106ebe] relative shrink-0">
      <Dolphins />
      <TitleRow />
      <TabRow />
    </div>
    <Ribbon />
    <RightHeader />
    <RightBody />
  </div>
);

export default function App() {
  return (
    <div className="w-[1920px] h-[1036px] flex overflow-hidden">
      <LeftWindow />
      <RightWindow />
    </div>
  );
}
